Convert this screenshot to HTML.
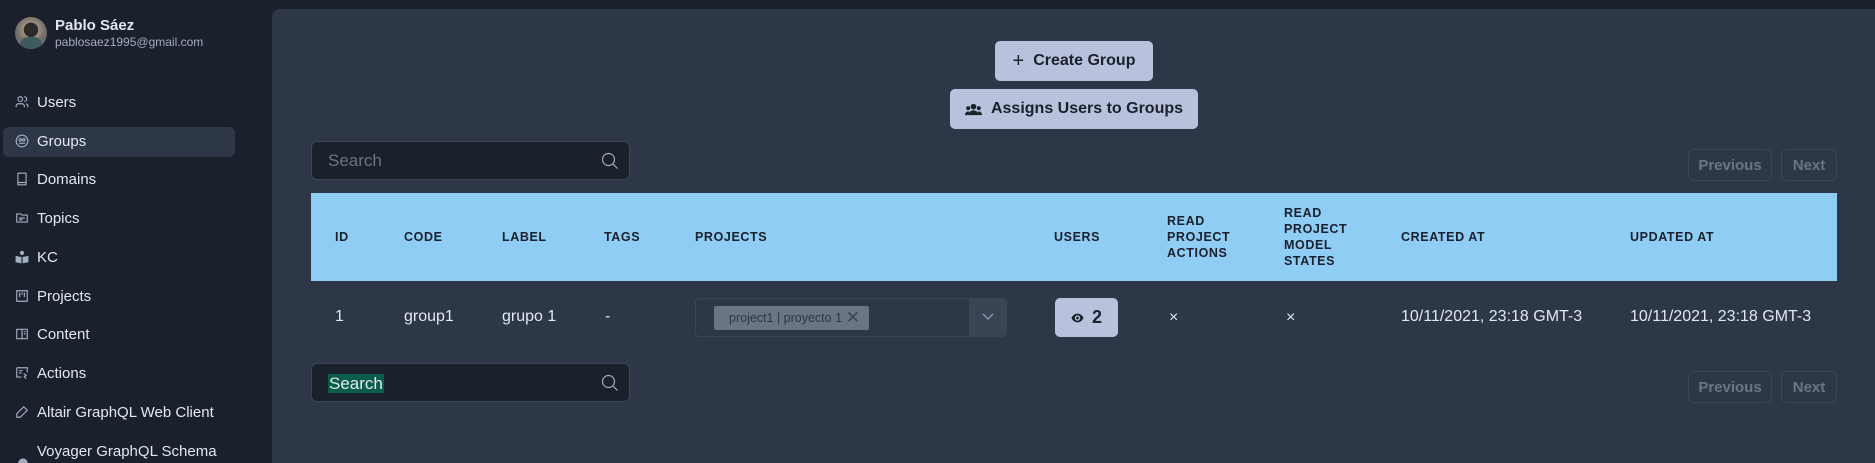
<!DOCTYPE html>
<html style="overflow:hidden;height:463px"><head><meta charset="utf-8"><style>
*{box-sizing:border-box;margin:0;padding:0}
body{width:1875px;height:463px;overflow:hidden;background:#1a202c;font-family:"Liberation Sans",sans-serif;position:relative;color:#e2e8f0}
.abs{position:absolute}
.av{left:15px;top:17px;width:32px;height:32px;border-radius:50%;background:radial-gradient(circle at 50% 40%,#3b3a38 0 28%,#a08e80 30%,#6d6a66 60%,#8e8a82 100%);overflow:hidden}
.name{left:55px;top:17px;font-weight:bold;font-size:15px;color:#e2e8f0}
.email{left:55px;top:35px;font-size:12px;color:#a0aec0}
.nav{left:3px;width:232px;height:30px;border-radius:6px;font-size:15px;color:#e2e8f0;overflow:hidden}
.nav span{position:absolute;left:34px;top:6px;white-space:nowrap}
.nav svg{position:absolute;left:12px;top:7px}
.sel{background:#2d3748}
.main{left:272px;top:9px;width:1603px;height:454px;background:#2d3748;border-radius:8px 0 0 0}
.btn{background:#b8c2dc;border-radius:5px;color:#1a202c;font-weight:bold;font-size:16px;display:flex;align-items:center;justify-content:center;gap:9px}
.search{width:319px;height:39px;background:#1a202c;border:1px solid #3b4556;border-radius:6px}
.search .t{position:absolute;left:16px;top:9px;font-size:17px}
.search svg{position:absolute;right:10px;top:10px}
.pg{height:32px;border:1px solid #3b4556;border-radius:6px;color:#6b7483;font-weight:bold;font-size:15px;display:flex;align-items:center;justify-content:center}
.hd{left:311px;top:193px;width:1526px;height:88px;background:#90cdf4}
.th{position:absolute;font-size:12.5px;font-weight:bold;color:#1a202c;letter-spacing:.6px;line-height:16px}
.td{position:absolute;font-size:16px;color:#e2e8f0;top:308px}
</style></head><body>
<div class="abs av"><div style="position:absolute;left:9px;top:6px;width:14px;height:14px;border-radius:50%;background:#2b2a28"></div><div style="position:absolute;left:5px;top:20px;width:22px;height:14px;border-radius:8px 8px 0 0;background:#3e5a5e"></div></div>
<div class="abs name">Pablo Sáez</div>
<div class="abs email">pablosaez1995@gmail.com</div>

<div class="abs nav" style="top:88px"><svg width="14" height="14" viewBox="0 0 24 24" fill="none" stroke="#a0aec0" stroke-width="2"><circle cx="9" cy="7" r="4"/><path d="M2 21v-2a4 4 0 014-4h6a4 4 0 014 4v2M16 3a4 4 0 010 8M22 21v-2a4 4 0 00-3-3.9"/></svg><span>Users</span></div>
<div class="abs nav sel" style="top:127px"><svg width="14" height="14" viewBox="0 0 24 24" fill="none" stroke="#a0aec0" stroke-width="2"><circle cx="12" cy="12" r="10"/><circle cx="9" cy="10" r="2"/><circle cx="15" cy="10" r="2"/><path d="M7 16h10"/></svg><span>Groups</span></div>
<div class="abs nav" style="top:165px"><svg width="14" height="14" viewBox="0 0 24 24" fill="none" stroke="#a0aec0" stroke-width="2"><path d="M5 2h14v20H5zM5 18h14"/></svg><span>Domains</span></div>
<div class="abs nav" style="top:204px"><svg width="14" height="14" viewBox="0 0 24 24" fill="none" stroke="#a0aec0" stroke-width="2"><path d="M3 5h7l2 2h9v12H3zM7 12h10M7 15h6"/></svg><span>Topics</span></div>
<div class="abs nav" style="top:243px"><svg width="14" height="14" viewBox="0 0 24 24" fill="#a0aec0"><circle cx="12" cy="5" r="3.5"/><path d="M1 10l10 2v11L1 21zM23 10l-10 2v11l10-2z"/></svg><span>KC</span></div>
<div class="abs nav" style="top:282px"><svg width="14" height="14" viewBox="0 0 24 24" fill="none" stroke="#a0aec0" stroke-width="2"><path d="M3 3h18v18H3zM8 6v8M12 6v4M16 6v8"/></svg><span>Projects</span></div>
<div class="abs nav" style="top:320px"><svg width="14" height="14" viewBox="0 0 24 24" fill="none" stroke="#a0aec0" stroke-width="2"><path d="M3 4h18v16H3zM12 4v16M15 8h3M15 12h3"/></svg><span>Content</span></div>
<div class="abs nav" style="top:359px"><svg width="14" height="14" viewBox="0 0 24 24" fill="none" stroke="#a0aec0" stroke-width="2"><path d="M3 3h18v8M3 3v16h8M7 8h6M7 12h4M15 13l4 3-3 2 3 4"/></svg><span>Actions</span></div>
<div class="abs nav" style="top:398px"><svg width="14" height="14" viewBox="0 0 24 24" fill="none" stroke="#a0aec0" stroke-width="2"><path d="M15 3l6 6L9 21H3v-6z"/></svg><span>Altair GraphQL Web Client</span></div>
<div class="abs nav" style="top:437px;height:26px"><svg width="16" height="12" viewBox="0 0 24 18" fill="#a0aec0" style="top:20px"><circle cx="12" cy="9" r="7"/><circle cx="4" cy="12" r="3"/><circle cx="20" cy="12" r="3"/></svg><span>Voyager GraphQL Schema</span></div>

<div class="abs main"></div>
<div class="abs btn" style="left:995px;top:41px;width:158px;height:40px"><span style="font-weight:normal;font-size:20px">+</span>Create Group</div>
<div class="abs btn" style="left:950px;top:89px;width:248px;height:40px"><svg width="17" height="13" viewBox="0 0 24 18" fill="#1a202c"><circle cx="12" cy="5" r="4"/><circle cx="4.5" cy="7" r="2.8"/><circle cx="19.5" cy="7" r="2.8"/><path d="M5 17a7 7 0 0114 0zM0 16a4.5 4.5 0 016-4l-1 5H0zM24 16a4.5 4.5 0 00-6-4l1 5h5z"/></svg>Assigns Users to Groups</div>

<div class="abs search" style="left:311px;top:141px"><div class="t" style="color:#6b7483">Search</div><svg width="18" height="18" viewBox="0 0 24 24" fill="none" stroke="#a0aec0" stroke-width="1.6"><circle cx="10" cy="10" r="8"/><path d="M16 16l6 6"/></svg></div>
<div class="abs pg" style="left:1688px;top:149px;width:84px">Previous</div>
<div class="abs pg" style="left:1781px;top:149px;width:56px">Next</div>

<div class="abs hd"></div>
<div class="th" style="left:335px;top:229px">ID</div>
<div class="th" style="left:404px;top:229px">CODE</div>
<div class="th" style="left:502px;top:229px">LABEL</div>
<div class="th" style="left:604px;top:229px">TAGS</div>
<div class="th" style="left:695px;top:229px">PROJECTS</div>
<div class="th" style="left:1054px;top:229px">USERS</div>
<div class="th" style="left:1167px;top:213px">READ<br>PROJECT<br>ACTIONS</div>
<div class="th" style="left:1284px;top:205px">READ<br>PROJECT<br>MODEL<br>STATES</div>
<div class="th" style="left:1401px;top:229px">CREATED AT</div>
<div class="th" style="left:1630px;top:229px">UPDATED AT</div>

<div class="td" style="left:335px">1</div>
<div class="td" style="left:404px">group1</div>
<div class="td" style="left:502px">grupo 1</div>
<div class="td" style="left:605px">-</div>
<div class="abs" style="left:695px;top:298px;width:312px;height:39px;border:1px solid #3b4556;border-radius:4px;background:#2d3748"></div>
<div class="abs" style="left:969px;top:299px;width:37px;height:37px;background:#3a4454;border-radius:0 4px 4px 0"></div>
<svg class="abs" style="left:981px;top:312px" width="14" height="10" viewBox="0 0 14 10" fill="none" stroke="#8a94a6" stroke-width="1.5"><path d="M2 2l5 5 5-5"/></svg>
<div class="abs" style="left:714px;top:306px;width:155px;height:24px;background:#6b7483;border-radius:2px;color:#2d3748;font-size:12.5px;line-height:24px;padding-left:15px">project1 | proyecto 1<span style="position:absolute;right:9px;top:0;font-size:17px;color:#3a4454">✕</span></div>
<div class="abs btn" style="left:1055px;top:298px;width:63px;height:39px;font-size:18px;gap:8px"><svg width="13" height="10" viewBox="0 0 24 18" fill="#1a202c"><path d="M12 1C6 1 2 6 1 9c1 3 5 8 11 8s10-5 11-8c-1-3-5-8-11-8zm0 13a5 5 0 110-10 5 5 0 010 10z"/><circle cx="12" cy="9" r="2.5"/></svg>2</div>
<div class="td" style="left:1169px;top:309px">×</div>
<div class="td" style="left:1286px;top:309px">×</div>
<div class="td" style="left:1401px">10/11/2021, 23:18 GMT-3</div>
<div class="td" style="left:1630px">10/11/2021, 23:18 GMT-3</div>

<div class="abs search" style="left:311px;top:363px"><div class="t" style="color:#e2e8f0;background:#0b5c48;padding:0 1px;line-height:19px;top:10px">Search</div><svg width="18" height="18" viewBox="0 0 24 24" fill="none" stroke="#a0aec0" stroke-width="1.6"><circle cx="10" cy="10" r="8"/><path d="M16 16l6 6"/></svg></div>
<div class="abs pg" style="left:1688px;top:371px;width:84px">Previous</div>
<div class="abs pg" style="left:1781px;top:371px;width:56px">Next</div>
</body></html>
